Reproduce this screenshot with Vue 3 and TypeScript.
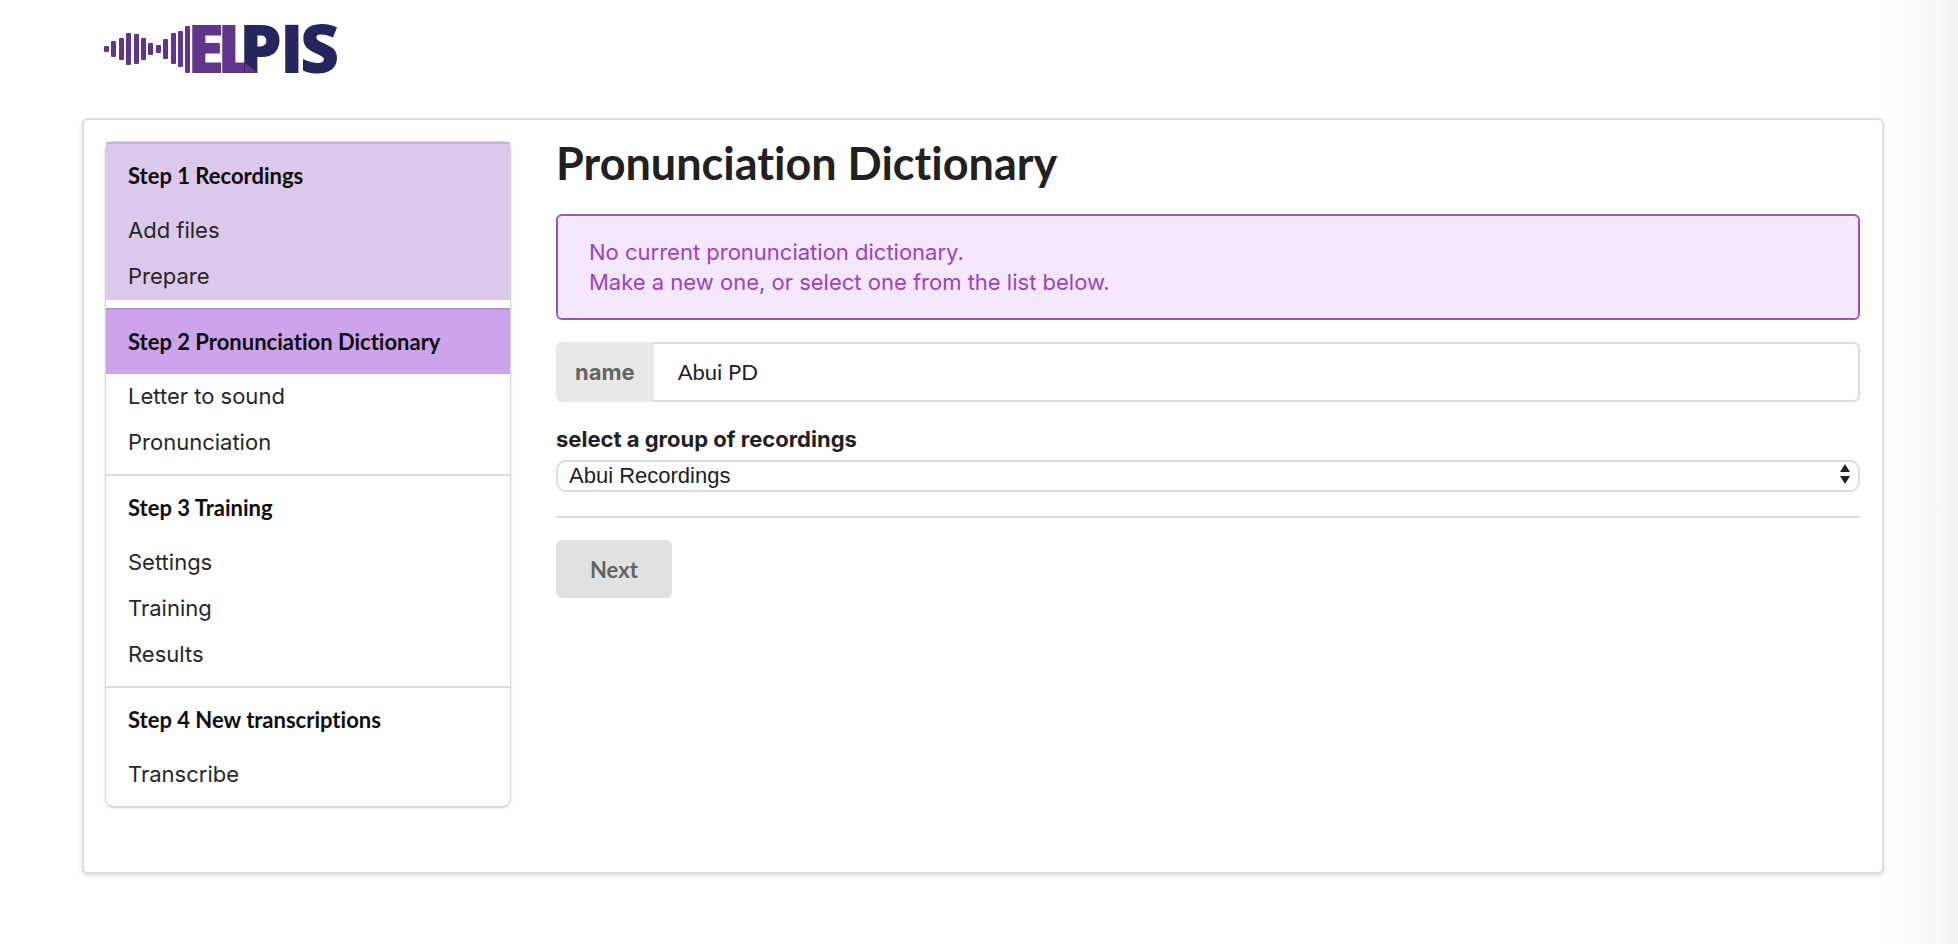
<script setup lang="ts">
import { ref } from 'vue'

interface Step {
  title: string
  items: string[]
  state: 'done' | 'current' | 'todo'
}

const steps: Step[] = [
  { title: 'Step 1 Recordings', items: ['Add files', 'Prepare'], state: 'done' },
  { title: 'Step 2 Pronunciation Dictionary', items: ['Letter to sound', 'Pronunciation'], state: 'current' },
  { title: 'Step 3 Training', items: ['Settings', 'Training', 'Results'], state: 'todo' },
  { title: 'Step 4 New transcriptions', items: ['Transcribe'], state: 'todo' },
]

interface Bar {
  x: number
  y: number
  h: number
}

const bars: Bar[] = [
  { x: 0, y: 22, h: 6 },
  { x: 7, y: 17, h: 16 },
  { x: 15, y: 14, h: 22 },
  { x: 22, y: 9, h: 32 },
  { x: 30, y: 10, h: 30 },
  { x: 37, y: 14, h: 22 },
  { x: 44, y: 19, h: 12 },
  { x: 52, y: 21, h: 8 },
  { x: 59, y: 15, h: 20 },
  { x: 67, y: 9, h: 31 },
  { x: 74, y: 7, h: 36 },
  { x: 81, y: 2, h: 47 },
]

const name = ref('Abui PD')
const group = ref('Abui Recordings')
</script>

<template>
  <div class="page">
    <header class="top">
      <a class="brand" href="#" aria-label="Elpis home">
        <svg width="236" height="54" viewBox="0 0 236 54" role="img" aria-label="ELPIS">
          <g class="purple">
            <rect v-for="bar in bars" :key="bar.x" :x="bar.x" :y="bar.y" width="5" :height="bar.h" rx="1" />
          </g>
          <text class="word" y="49">
            <tspan class="purple" x="83">E</tspan><tspan class="purple" x="113">L</tspan><tspan class="navy" x="135">P</tspan><tspan class="navy" x="176">I</tspan><tspan class="navy" x="196">S</tspan>
          </text>
          <path class="purple" d="M141 39 L154 49 H141 Z" />
        </svg>
      </a>
    </header>

    <main class="card">
      <nav class="menu" aria-label="Steps">
        <section v-for="step in steps" :key="step.title" class="step" :class="step.state">
          <div class="step-body">
            <h2 class="step-title">{{ step.title }}</h2>
            <a v-for="item in step.items" :key="item" class="step-item" href="#">{{ item }}</a>
          </div>
        </section>
      </nav>

      <form class="content" @submit.prevent>
        <h1 class="heading">Pronunciation Dictionary</h1>
        <p class="message">No current pronunciation dictionary.<br />Make a new one, or select one from the list below.</p>
        <div class="field">
          <label class="tag" for="pd-name">name</label>
          <input id="pd-name" v-model="name" class="input" type="text" />
        </div>
        <label class="caption" for="pd-group">select a group of recordings</label>
        <div class="select-wrap">
          <select id="pd-group" v-model="group" class="select">
            <option>Abui Recordings</option>
          </select>
          <svg class="arrows" width="10" height="20" viewBox="0 0 10 20" aria-hidden="true">
            <path d="M5 0 L10 8 H0 Z M0 12 H10 L5 20 Z" />
          </svg>
        </div>
        <hr class="divider" />
        <button class="next" type="submit" disabled>Next</button>
      </form>
    </main>
  </div>
</template>

<style>
html {
  min-height: 100%;
  background: linear-gradient(to left, #f1f1f1, #f8f8f8 20px, #fcfcfc 44px, #fff 76px);
}
</style>

<style scoped>
.page {
  box-sizing: border-box;
  padding: 24px 74px 40px 82px;
  font-family: Inter, "Liberation Sans", sans-serif;
  font-size: 22px;
  font-variant-ligatures: none;
  color: #212121;
}

.page * {
  box-sizing: border-box;
}

.top {
  height: 94px;
  padding-left: 22px;
}

.brand {
  display: inline-block;
}

.brand svg {
  display: block;
  overflow: visible;
}

.purple {
  fill: #61358c;
}

.navy {
  fill: #25265e;
}

.word {
  font-family: "Open Sans", sans-serif;
  font-size: 68px;
  font-weight: 800;
}

.card {
  display: flex;
  align-items: flex-start;
  gap: 45px;
  padding: 21px 22px 65px 21px;
  border: 2px solid #dcdddd;
  border-radius: 6px;
  background: #fff;
  box-shadow: 0 2px 4px rgba(34, 36, 38, 0.14);
}

.menu {
  flex: 0 0 406px;
  border: 1px solid #d4d4d5;
  border-radius: 8px;
  box-shadow: 0 1px 2px rgba(34, 36, 38, 0.2);
}

.step {
  padding-bottom: 8px;
}

.step-body {
  border-top: 2px solid #dededf;
}

.step:first-child .step-body {
  border-top-color: #c7b4d5;
}

.done .step-body {
  background: #dcc8ea;
}

.current .step-body {
  border-top-color: #b893d2;
}

.current .step-title {
  background: #cba4eb;
}

.step-title {
  margin: 0;
  padding: 0 22px;
  font-family: Lato, sans-serif;
  font-size: 22px;
  font-weight: 700;
  line-height: 64px;
  color: #0d0d0d;
}

.step-item {
  display: block;
  padding: 0 22px 2px;
  line-height: 44px;
  color: #272727;
  text-decoration: none;
}

.content {
  flex: 1;
  min-width: 0;
}

.heading {
  margin: 0 0 28px;
  font-family: Lato, sans-serif;
  font-size: 45px;
  font-weight: 700;
  line-height: 45px;
}

.message {
  margin: 0 0 22px;
  padding: 21px 31px;
  border: 2px solid #a24fc8;
  border-radius: 6px;
  background: #f4e7fe;
  line-height: 30px;
  color: #9a42c8;
}

.field {
  display: flex;
  height: 60px;
}

.tag {
  flex: none;
  padding: 0 19px;
  border-radius: 6px 0 0 6px;
  background: #e8e8e8;
  font-weight: 700;
  line-height: 60px;
  color: #646464;
}

.input {
  flex: 1;
  min-width: 0;
  padding: 0 24px 2px;
  border: 2px solid #dcdddd;
  border-left: 0;
  border-radius: 0 6px 6px 0;
  background: #fff;
  font-family: Lato, sans-serif;
  font-size: 22px;
  color: #212121;
}

.caption {
  display: block;
  margin-top: 22px;
  font-weight: 700;
  line-height: 30px;
}

.select-wrap {
  position: relative;
  margin-top: 6px;
}

.select {
  display: block;
  width: 100%;
  height: 32px;
  padding: 0 11px;
  border: 2px solid #dcdddd;
  border-radius: 10px;
  appearance: none;
  background: #fff;
  font-family: "Liberation Sans", sans-serif;
  font-size: 22px;
  line-height: 28px;
  color: #212121;
}

.arrows {
  position: absolute;
  top: 4px;
  right: 10px;
  fill: #212121;
  pointer-events: none;
}

.divider {
  height: 2px;
  margin: 24px 0 22px;
  border: 0;
  background: #dededf;
}

.next {
  display: block;
  height: 58px;
  padding: 0 34px;
  border: 0;
  border-radius: 6px;
  background: #e0e1e2;
  font-family: Lato, sans-serif;
  font-size: 22px;
  font-weight: 700;
  color: #636465;
}
</style>
